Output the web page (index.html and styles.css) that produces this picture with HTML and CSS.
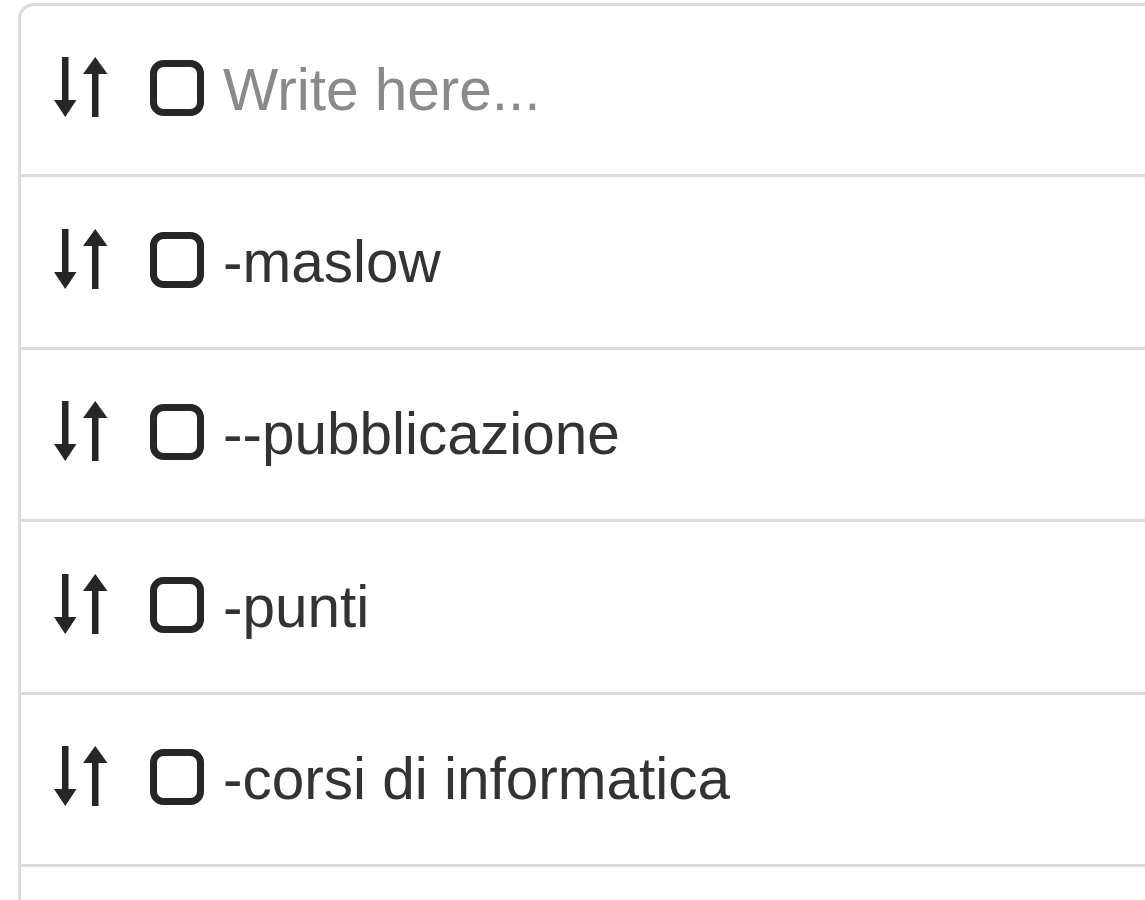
FILE: index.html
```html
<!DOCTYPE html>
<html>
<head>
<meta charset="utf-8">
<link rel="stylesheet" href="styles.css">
</head>
<body>
<ul class="list">
  <li class="item">
    <svg class="sort" viewBox="0 0 60 60"><rect x="12" y="0" width="6.5" height="46"/><polygon points="4,43 26.5,43 15.25,60"/><rect x="42" y="14" width="6.5" height="46"/><polygon points="33,17 57.5,17 45.25,0"/></svg>
    <svg class="check" viewBox="0 0 54 56"><rect x="3.5" y="3.5" width="47" height="49" rx="10" ry="10"/></svg>
    <span class="placeholder">Write here...</span>
  </li>
  <li class="item">
    <svg class="sort" viewBox="0 0 60 60"><rect x="12" y="0" width="6.5" height="46"/><polygon points="4,43 26.5,43 15.25,60"/><rect x="42" y="14" width="6.5" height="46"/><polygon points="33,17 57.5,17 45.25,0"/></svg>
    <svg class="check" viewBox="0 0 54 56"><rect x="3.5" y="3.5" width="47" height="49" rx="10" ry="10"/></svg>
    <span class="text">-maslow</span>
  </li>
  <li class="item">
    <svg class="sort" viewBox="0 0 60 60"><rect x="12" y="0" width="6.5" height="46"/><polygon points="4,43 26.5,43 15.25,60"/><rect x="42" y="14" width="6.5" height="46"/><polygon points="33,17 57.5,17 45.25,0"/></svg>
    <svg class="check" viewBox="0 0 54 56"><rect x="3.5" y="3.5" width="47" height="49" rx="10" ry="10"/></svg>
    <span class="text">--pubblicazione</span>
  </li>
  <li class="item">
    <svg class="sort" viewBox="0 0 60 60"><rect x="12" y="0" width="6.5" height="46"/><polygon points="4,43 26.5,43 15.25,60"/><rect x="42" y="14" width="6.5" height="46"/><polygon points="33,17 57.5,17 45.25,0"/></svg>
    <svg class="check" viewBox="0 0 54 56"><rect x="3.5" y="3.5" width="47" height="49" rx="10" ry="10"/></svg>
    <span class="text">-punti</span>
  </li>
  <li class="item">
    <svg class="sort" viewBox="0 0 60 60"><rect x="12" y="0" width="6.5" height="46"/><polygon points="4,43 26.5,43 15.25,60"/><rect x="42" y="14" width="6.5" height="46"/><polygon points="33,17 57.5,17 45.25,0"/></svg>
    <svg class="check" viewBox="0 0 54 56"><rect x="3.5" y="3.5" width="47" height="49" rx="10" ry="10"/></svg>
    <span class="text">-corsi di informatica</span>
  </li>
  <li class="item item-last"></li>
</ul>
</body>
</html>
```
FILE: styles.css
```css
html, body {
  margin: 0;
  padding: 0;
  background: #ffffff;
  overflow: hidden;
}
body {
  font-family: "Liberation Sans", Arial, sans-serif;
  height: 900px;
}
.list {
  list-style: none;
  margin: 3px 0 0 18px;
  padding: 0;
  border-top: 3px solid #dcdcdc;
  border-left: 3px solid #dcdcdc;
  border-top-left-radius: 16px;
}
.item {
  display: flex;
  align-items: center;
  height: 169.5px;
  padding-left: 29px;
  border-bottom: 3px solid #dcdcdc;
  box-sizing: content-box;
}
.item:first-child {
  height: 168px;
}
.item-last {
  height: 33px;
  border-bottom: none;
}
.sort {
  width: 60px;
  height: 60px;
  fill: #262626;
  flex: none;
  margin-top: -6px;
}
.check {
  width: 54px;
  height: 56px;
  margin-left: 40px;
  flex: none;
  fill: none;
  stroke: #262626;
  stroke-width: 7;
  margin-top: -4px;
}
.text, .placeholder {
  margin-left: 19px;
  font-size: 58.5px;
  line-height: 1;
  color: #333333;
}
.placeholder {
  color: #8a8a8a;
}
```
